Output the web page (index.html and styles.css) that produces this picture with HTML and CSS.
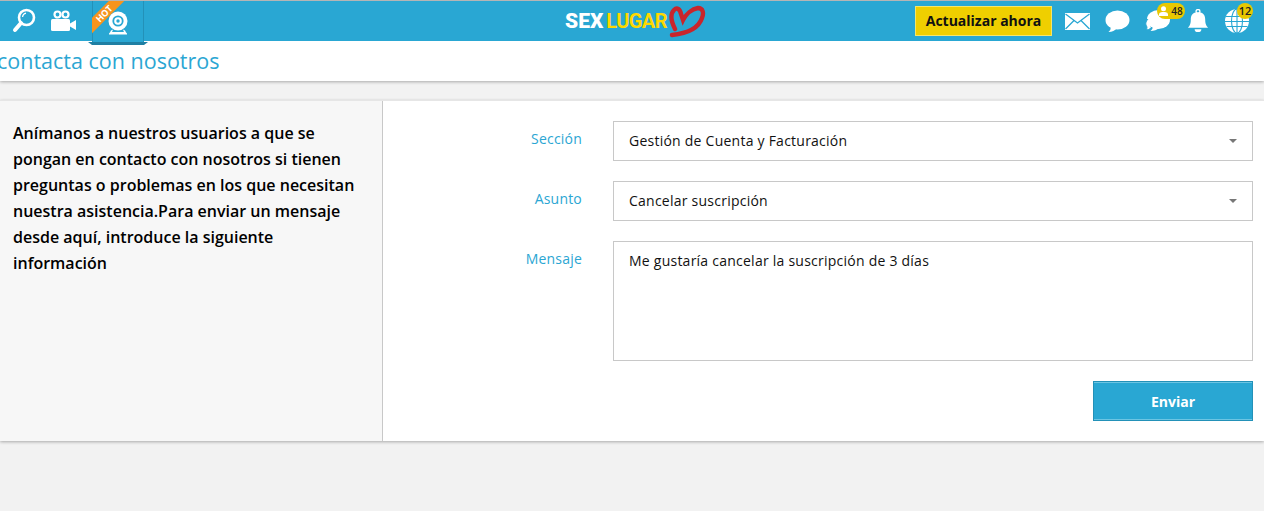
FILE: index.html
```html
<!DOCTYPE html>
<html lang="es">
<head>
  <meta charset="UTF-8" />
  <meta name="viewport" content="width=device-width, initial-scale=1.0" />
  <title>Contacta con nosotros</title>
  <link rel="stylesheet" href="styles.css">
</head>
<body>

  <header class="topbar">
    <nav class="nav-left">
      <a class="nav-icon nav-search" href="#">
        <svg width="24" height="26" viewBox="0 0 24 26"><circle cx="14.5" cy="9.5" r="7.5" fill="none" stroke="#fff" stroke-width="2.6"/><path d="M9 15 L3 22" stroke="#fff" stroke-width="4" stroke-linecap="round"/><path d="M10.5 9 A4.5 4.5 0 0 1 14 5.2" fill="none" stroke="#fff" stroke-width="1.2"/></svg>
      </a>
      <a class="nav-icon nav-video" href="#">
        <svg width="26" height="22" viewBox="0 0 26 22"><circle cx="6.5" cy="4.5" r="3" fill="none" stroke="#fff" stroke-width="2.2"/><circle cx="14.5" cy="4.5" r="3" fill="none" stroke="#fff" stroke-width="2.2"/><rect x="0" y="9" width="19" height="12" rx="1.5" fill="#fff"/><path d="M19 13.5 L25 10 V20 L19 16.5Z" fill="#fff"/></svg>
      </a>
      <a class="nav-icon nav-cam" href="#">
        <span class="hot-clip"><span class="hot-ribbon">HOT</span></span>
        <svg width="20" height="24" viewBox="0 0 20 24"><circle cx="10" cy="10" r="9.5" fill="#fff"/><circle cx="10" cy="10" r="5.6" fill="#29a7d3"/><circle cx="10" cy="10" r="3.8" fill="#fff"/><circle cx="10" cy="10" r="1.7" fill="#29a7d3"/><path d="M3 19.5 Q2.200 21.500 1 22.500 V23.500 H19 V22.500 Q17.800 21.500 17 19.500 L15 18.500 Q15.500 20 16 21 H4 Q4.500 20 5 18.500Z" fill="#fff"/></svg>
      </a>
    </nav>

    <a class="logo" href="#">
      <span class="logo-sex">SEX</span><span class="logo-lugar">LUGAR</span>
      <svg class="logo-heart" width="38" height="34" viewBox="0 0 38 34"><path d="M6 24 C2 16 1 9 5 5 C8 2 11 4 12 9 L14 15 C17 9 23 4 29 3 C34 3 35 8 33 13 C30 22 22 28 3 30" fill="none" stroke="#c9252c" stroke-width="4.400" stroke-linecap="round"/></svg>
    </a>

    <div class="nav-right">
      <a class="upgrade-btn" href="#">Actualizar ahora</a>
      <a class="nav-icon" href="#">
        <svg width="25" height="17" viewBox="0 0 25 17"><rect width="25" height="17" fill="#fff"/><path d="M0.500 1 L12.500 10 L24.500 1 M0.500 16 L9 7.500 M24.500 16 L16 7.500" fill="none" stroke="#29a7d3" stroke-width="1.300"/></svg>
      </a>
      <a class="nav-icon" href="#">
        <svg width="25" height="23" viewBox="0 0 25 23"><ellipse cx="12.500" cy="10" rx="12" ry="9.500" fill="#fff"/><path d="M6 16 Q6 20 3.500 22 Q9 22 12 18Z" fill="#fff"/></svg>
      </a>
      <a class="nav-icon nav-chat" href="#">
        <svg width="26" height="24" viewBox="0 0 26 24"><ellipse cx="13.500" cy="10.500" rx="11.500" ry="9.500" fill="#fff"/><path d="M8 17 Q8 20 5.500 22 Q11 22 14 19Z" fill="#fff"/><path d="M3 10 Q-1 14 2 18 Q2 20 1 21 Q4 21 6 19" fill="#fff" stroke="#29a7d3" stroke-width="1"/></svg>
        <span class="badge badge-wide">
          <svg width="9" height="10" viewBox="0 0 9 10"><circle cx="4.500" cy="2.800" r="2.500" fill="#fff"/><path d="M0 10 V8 Q0 6.500 3 6 H6 Q9 6.500 9 8 V10Z" fill="#fff"/></svg>48</span>
      </a>
      <a class="nav-icon nav-bell" href="#">
        <svg width="22" height="24" viewBox="0 0 22 25"><circle cx="11" cy="2.500" r="2" fill="none" stroke="#fff" stroke-width="1.400"/><path d="M11 3.500 C5 3.500 3.500 7 3.500 11 C3.500 15 3 17 0.500 19.500 H21.500 C19 17 18.500 15 18.500 11 C18.500 7 17 3.500 11 3.500Z" fill="#fff"/><path d="M7.500 21 H14.500 A3.500 3 0 0 1 7.500 21Z" fill="#fff"/></svg>
      </a>
      <a class="nav-icon nav-globe" href="#">
        <svg width="24" height="24" viewBox="0 0 24 24"><circle cx="12" cy="12" r="12" fill="#fff"/><g fill="none" stroke="#29a7d3" stroke-width="1.100"><ellipse cx="12" cy="12" rx="5.500" ry="12"/><path d="M12 0 V24 M1 7.500 H23 M0 12.500 H24 M1.500 17.500 H22.500"/></g></svg>
        <span class="badge">12</span>
      </a>
    </div>
  </header>

  <div class="title-bar">
    <h1>contacta con nosotros</h1>
  </div>

  <main class="contact">
    <aside class="contact-intro">
      <p>Anímanos a nuestros usuarios a que se pongan en contacto con nosotros si tienen preguntas o problemas en los que necesitan nuestra asistencia.Para enviar un mensaje desde aquí, introduce la siguiente información</p>
    </aside>

    <form class="contact-form">
      <div class="form-row">
        <label for="section">Sección</label>
        <div class="select-wrap">
          <select id="section">
            <option>Gestión de Cuenta y Facturación</option>
          </select>
        </div>
      </div>
      <div class="form-row">
        <label for="subject">Asunto</label>
        <div class="select-wrap">
          <select id="subject">
            <option>Cancelar suscripción</option>
          </select>
        </div>
      </div>
      <div class="form-row">
        <label for="message">Mensaje</label>
        <textarea id="message">Me gustaría cancelar la suscripción de 3 días</textarea>
      </div>
      <div class="form-actions">
        <button type="button" class="send-btn">Enviar</button>
      </div>
    </form>
  </main>

</body>
</html>
```

FILE: styles.css
```css
html, body {
  height: 511px;
  overflow: hidden;
}
body {
  margin: 0;
  background-color: #f2f2f2;
  font-family: "Open Sans", Arial, sans-serif;
  color: #000;
}
a {
  text-decoration: none;
}

.topbar {
  height: 40px;
  background-color: #29a7d3;
  border-top: 1px solid #b5b5b5;
  display: flex;
  align-items: center;
  justify-content: space-between;
  position: relative;
}
.nav-left {
  display: flex;
  align-items: center;
  height: 40px;
  padding-left: 12px;
}
.nav-icon {
  position: relative;
  display: flex;
  align-items: center;
  justify-content: center;
}
.nav-search {
  width: 24px;
  margin-right: 15px;
}
.nav-video {
  width: 26px;
  margin-right: 15px;
}
.nav-cam {
  width: 52px;
  height: 41px;
  align-self: flex-start;
  background-color: #29a7d3;
  border-bottom: 3px solid #1f7fa3;
  box-shadow: inset 1px 0 0 #2391b8, inset -1px 0 0 #2391b8;
  z-index: 2;
}
.nav-cam::before,
.nav-cam::after {
  content: "";
  position: absolute;
  bottom: -3px;
  border-top: 3px solid #1f7fa3;
}
.nav-cam::before {
  left: -4px;
  border-left: 4px solid transparent;
}
.nav-cam::after {
  right: -4px;
  border-right: 4px solid transparent;
}
.nav-cam svg {
  margin-top: 2px;
}
.hot-clip {
  position: absolute;
  left: 0;
  top: 0;
  right: 0;
  bottom: 0;
  overflow: hidden;
}
.hot-ribbon {
  position: absolute;
  left: -19px;
  top: 7px;
  width: 62px;
  height: 11px;
  line-height: 11px;
  background-color: #f7941d;
  color: #fff;
  font-size: 9px;
  font-weight: 700;
  text-align: center;
  transform: rotate(-45deg);
}

.logo {
  position: absolute;
  left: 565px;
  top: 0;
  height: 40px;
  display: flex;
  align-items: center;
  font-family: "Roboto", "Liberation Sans", sans-serif;
  font-size: 21px;
  font-weight: 900;
}
.logo-sex {
  color: #fff;
  margin-right: 3px;
}
.logo-lugar {
  color: #ffd800;
  font-size: 20px;
  font-weight: 700;
  letter-spacing: -0.6px;
}
.logo-heart {
  margin-left: 2px;
  margin-top: 2px;
}

.nav-right {
  display: flex;
  align-items: center;
  height: 40px;
  padding-right: 15px;
  gap: 15px;
}
.upgrade-btn {
  width: 135px;
  height: 28px;
  line-height: 28px;
  margin-right: -2px;
  background-color: #efcf00;
  border: 1px solid #f5e56a;
  color: #111;
  font-size: 14px;
  font-weight: 700;
  text-align: center;
}
.nav-chat,
.nav-bell {
  margin-right: 1px;
}
.badge {
  position: absolute;
  right: -4px;
  top: -6px;
  width: 16px;
  height: 16px;
  line-height: 16px;
  border-radius: 8px;
  background-color: #e9c800;
  color: #222;
  font-size: 11px;
  font-weight: 600;
  text-align: center;
}
.badge-wide {
  display: flex;
  align-items: center;
  justify-content: center;
  gap: 3px;
  right: -14px;
  width: 28px;
  font-size: 10px;
}

.title-bar {
  height: 40px;
  background-color: #fff;
  box-shadow: 0 1px 3px rgba(0, 0, 0, 0.3);
  display: flex;
  align-items: center;
}
.title-bar h1 {
  margin: -2px 0 0 -3px;
  font-size: 21.5px;
  font-weight: 400;
  color: #2ba6d3;
}

.contact {
  margin-top: 19px;
  height: 340px;
  display: flex;
  background-color: #fff;
  border-top: 1px solid #e6e6e6;
  box-shadow: 0 1px 3px rgba(0, 0, 0, 0.3);
}
.contact-intro {
  box-sizing: border-box;
  width: 383px;
  padding: 19px 20px 0 13px;
  background-color: #f7f7f7;
  border-right: 1px solid #c8c8c8;
  flex-shrink: 0;
}
.contact-intro p {
  margin: 0;
  font-size: 16px;
  font-weight: 600;
  line-height: 26px;
}

.contact-form {
  flex: 1;
  padding: 20px 11px 0 0;
  display: flex;
  flex-direction: column;
  gap: 20px;
}
.form-row {
  display: flex;
  align-items: flex-start;
}
.form-row label {
  width: 199px;
  margin-right: 31px;
  padding-top: 8px;
  text-align: right;
  font-size: 14px;
  font-weight: 500;
  letter-spacing: 0.2px;
  color: #2ba6d3;
}
.select-wrap {
  position: relative;
  width: 640px;
}
.select-wrap::after {
  content: "";
  position: absolute;
  right: 16px;
  top: 18px;
  border-left: 4px solid transparent;
  border-right: 4px solid transparent;
  border-top: 4px solid #777;
}
select, textarea {
  box-sizing: border-box;
  width: 640px;
  background-color: #fff;
  border: 1px solid #c8c8c8;
  border-radius: 0;
  font-family: "Open Sans", Arial, sans-serif;
  font-size: 14px;
  font-weight: 500;
  letter-spacing: 0.24px;
  color: #111;
  outline: none;
}
select {
  height: 40px;
  padding: 0 15px 2px;
  appearance: none;
  display: block;
}
textarea {
  height: 120px;
  padding: 9px 15px;
  resize: none;
}
.form-actions {
  display: flex;
  justify-content: flex-end;
}
.send-btn {
  width: 160px;
  height: 40px;
  background-color: #29a7d3;
  border: 1px solid #2391b8;
  box-shadow: inset 0 1px 0 #6cc5e3, inset 0 -1px 0 #6cc5e3;
  color: #fff;
  font-family: "Open Sans", Arial, sans-serif;
  font-size: 14px;
  font-weight: 700;
}
```
